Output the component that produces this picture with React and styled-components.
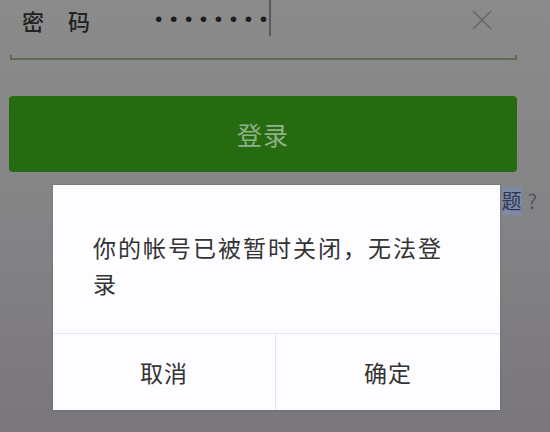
import React from 'react';
import styled, { createGlobalStyle } from 'styled-components';

const GlobalStyle = createGlobalStyle`
  html, body {
    margin: 0;
    padding: 0;
  }
  body {
    font-family: "Noto Sans CJK SC", "Noto Sans", "Liberation Sans", sans-serif;
  }
`;

const Screen = styled.div`
  position: relative;
  width: 550px;
  height: 432px;
  overflow: hidden;
  background: linear-gradient(180deg, #8b8b8b 0%, #848385 50%, #7a777b 100%);
  padding: 0 33px 0 9px;
  box-sizing: border-box;
`;

const Field = styled.div`
  display: flex;
  align-items: flex-start;
  height: 55px;
  padding-left: 13px;
  padding-right: 24px;
`;

const Label = styled.div`
  width: 133px;
  font-size: 22px;
  line-height: 28px;
  padding-top: 6px;
  color: #222;
  font-weight: 500;
  letter-spacing: 24px;
  white-space: nowrap;
`;

const Dots = styled.div`
  display: flex;
  align-items: flex-start;
  flex: 1;
  font-family: "Liberation Sans", sans-serif;
  font-size: 21px;
  line-height: 28px;
  padding-top: 5px;
  color: #1c1c1c;
  letter-spacing: 7.6px;
`;

const Cursor = styled.span`
  display: block;
  width: 2px;
  height: 36px;
  margin-top: -5px;
  margin-left: -6px;
  background: #5a5a5a;
`;

const Clear = styled.svg`
  width: 22px;
  height: 22px;
  margin-top: 9px;
`;

const Underline = styled.div`
  height: 3px;
  margin: 0 0 0 1px;
  border: 2px solid #5f6a55;
  border-top: none;
`;

const LoginButton = styled.div`
  margin-top: 36px;
  height: 76px;
  border-radius: 4px;
  background: #276b10;
  display: flex;
  align-items: center;
  justify-content: center;
  color: #8fb088;
  font-size: 25px;
  letter-spacing: 1px;
`;

const HelpRow = styled.div`
  display: flex;
  justify-content: flex-end;
  margin-right: -20px;
  margin-top: 15px;
  font-size: 20px;
  line-height: 28px;
  color: #2f3850;
`;

const Highlight = styled.span`
  background: #7d8aa6;
`;

const Question = styled.span`
  color: #50555c;
  margin-left: 6px;
`;

const Dialog = styled.div`
  position: absolute;
  left: 53px;
  top: 185px;
  width: 447px;
  height: 225px;
  background: #fdfcfe;
  display: flex;
  flex-direction: column;
  box-shadow: 0 0 2px rgba(0, 0, 0, 0.2);
`;

const Message = styled.div`
  height: 149px;
  box-sizing: border-box;
  padding: 44px 40px 0 40px;
  font-size: 23px;
  line-height: 36px;
  letter-spacing: 2px;
  color: #333;
  border-bottom: 1px solid #e6e6e8;
`;

const Actions = styled.div`
  flex: 1;
  display: grid;
  grid-template-columns: 222px 1fr;
`;

const Action = styled.div`
  display: flex;
  align-items: center;
  justify-content: center;
  font-size: 23px;
  color: #333;
  letter-spacing: 1px;
  border-left: ${(p) => (p.$divided ? '1px solid #e6e6e8' : 'none')};
`;

export default function App() {
  return (
    <>
      <GlobalStyle />
      <Screen>
        <Field>
          <Label>密码</Label>
          <Dots>
            ••••••••
            <Cursor />
          </Dots>
          <Clear viewBox="0 0 22 22" fill="none" stroke="#666" strokeWidth="1.6">
            <path d="M2 2 L20 20 M20 2 L2 20" />
          </Clear>
        </Field>
        <Underline />
        <LoginButton>登录</LoginButton>
        <HelpRow>
          登录遇到问<Highlight>题</Highlight>
          <Question>?</Question>
        </HelpRow>
        <Dialog>
          <Message>你的帐号已被暂时关闭，无法登录</Message>
          <Actions>
            <Action>取消</Action>
            <Action $divided>确定</Action>
          </Actions>
        </Dialog>
      </Screen>
    </>
  );
}
